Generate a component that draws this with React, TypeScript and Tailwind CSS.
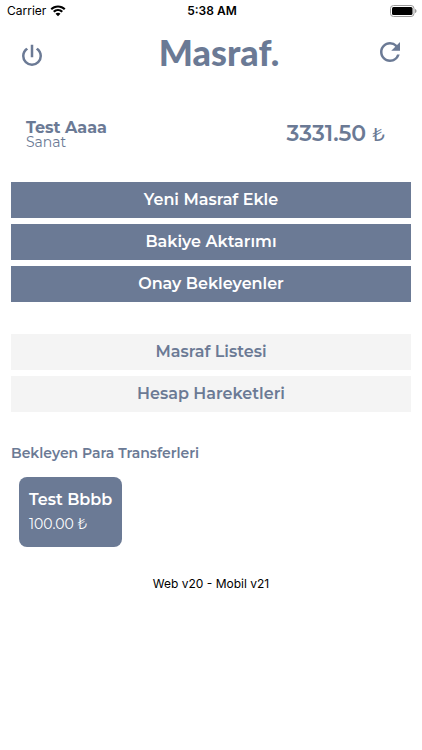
import React from 'react';
import { MdRefresh } from 'react-icons/md';

const mainLinks = ['Yeni Masraf Ekle', 'Bakiye Aktarımı', 'Onay Bekleyenler'];
const listLinks = ['Masraf Listesi', 'Hesap Hareketleri'];

const WifiIcon = () => (
	<svg width="16" height="12" viewBox="0 0 16 12" fill="currentColor" aria-hidden="true">
		<path d="M8 0.5C11 0.5 13.6 1.6 15.5 3.5L14 5C12.4 3.4 10.3 2.5 8 2.5S3.6 3.4 2 5L0.5 3.5C2.4 1.6 5 0.5 8 0.5Z" />
		<path d="M8 4.1C9.9 4.1 11.7 4.9 13 6.1L11.5 7.6C10.6 6.7 9.4 6.1 8 6.1S5.4 6.7 4.5 7.6L3 6.1C4.3 4.9 6.1 4.1 8 4.1Z" />
		<path d="M8 7.7C9 7.7 9.9 8.1 10.5 8.7L8 11.2L5.5 8.7C6.1 8.1 7 7.7 8 7.7Z" />
	</svg>
);

const BatteryIcon = () => (
	<svg width="27" height="12" viewBox="0 0 27 12" aria-hidden="true">
		<rect x="0.5" y="0.5" width="23.5" height="11" rx="3" fill="none" stroke="#9a9a9a" />
		<rect x="2" y="2" width="20.5" height="8" rx="1.5" fill="#000" />
		<path d="M25 4V8C26 7.7 26.5 7 26.5 6S26 4.3 25 4Z" fill="#9a9a9a" />
	</svg>
);

const PowerIcon = () => (
	<svg width="30" height="30" viewBox="0 0 24 24" fill="currentColor" aria-hidden="true">
		<path d="M16.56 5.44L15.11 6.89C16.84 7.94 18 9.83 18 12A6 6 0 0 1 12 18A6 6 0 0 1 6 12C6 9.83 7.16 7.94 8.88 6.88L7.44 5.44C5.36 6.88 4 9.28 4 12A8 8 0 0 0 12 20A8 8 0 0 0 20 12C20 9.28 18.64 6.88 16.56 5.44M13 3H11V13H13" />
	</svg>
);

const StatusBar = () => (
	<div className="grid grid-cols-3 items-center h-[22px] pl-[7px] pr-[5px] text-black text-xs font-['Inter',sans-serif]">
		<div className="flex items-center gap-1">
			<span>Carrier</span>
			<WifiIcon />
		</div>
		<div className="text-center font-semibold">5:38 AM</div>
		<div className="flex justify-end">
			<BatteryIcon />
		</div>
	</div>
);

const App = () => {
	return (
		<div className="min-h-screen bg-white text-[#6b7a95] font-['Montserrat','Inter','Noto_Sans',sans-serif]">
			<StatusBar />
			<header className="flex justify-between items-center h-[60px] px-[17px]">
				<button type="button" aria-label="Çıkış" className="pt-2">
					<PowerIcon />
				</button>
				<h1 className="pl-4 text-[36px] leading-[60px] font-black font-['Lato',sans-serif]">
					Masraf.
				</h1>
				<button type="button" aria-label="Yenile">
					<MdRefresh size={30} />
				</button>
			</header>

			<section className="flex justify-between items-center pt-9 pl-[26px] pr-[37px]">
				<div>
					<div className="text-base leading-[15px] font-bold">Test Aaaa</div>
					<div className="text-sm leading-[15px]">Sanat</div>
				</div>
				<div className="flex items-baseline gap-1.5">
					<span className="text-[22px] leading-8 font-semibold">3331.50</span>
					<span className="text-lg leading-8 font-medium">₺</span>
				</div>
			</section>

			<main className="px-[11px]">
				<nav className="flex flex-col gap-1.5 pt-[31px]">
					{mainLinks.map((title) => (
						<button
							key={title}
							type="button"
							className="h-9 w-full bg-[#6b7a95] text-white text-base font-semibold"
						>
							{title}
						</button>
					))}
				</nav>
				<nav className="flex flex-col gap-1.5 pt-8">
					{listLinks.map((title) => (
						<button
							key={title}
							type="button"
							className="h-9 w-full bg-[#f4f4f4] text-base font-semibold"
						>
							{title}
						</button>
					))}
				</nav>

				<h2 className="pt-8 text-sm leading-[18px] font-semibold">Bekleyen Para Transferleri</h2>
				<div className="flex pt-[15px] pl-2">
					<button
						type="button"
						className="h-[70px] px-2.5 rounded-lg bg-[#6b7a95] text-white text-left"
					>
						<div className="text-base leading-6 font-semibold">Test Bbbb</div>
						<div className="text-sm leading-6">100.00 ₺</div>
					</button>
				</div>
			</main>

			<footer className="pt-7 text-center text-xs leading-[18px] text-black font-['Inter',sans-serif]">
				Web v20 - Mobil v21
			</footer>
		</div>
	);
};

export default App;
